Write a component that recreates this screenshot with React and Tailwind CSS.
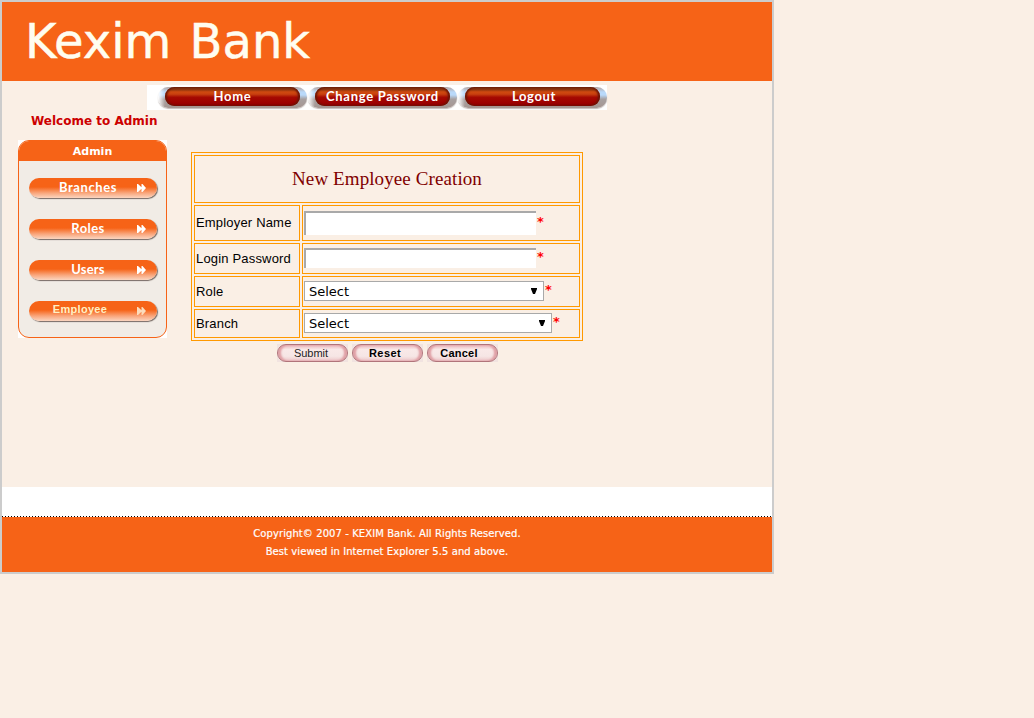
import React from 'react';

function NavButton({ label, text }) {
  return (
    <a className="flex h-[21px] w-[149px] shrink-0 cursor-pointer rounded-[10px] bg-[linear-gradient(90deg,#fff_0px,rgba(255,255,255,0)_7px),linear-gradient(180deg,#b5a5a0_0%,#b9d9fa_24%,#b9d9fa_38%,#a7a0a0_58%,#a59692_100%)] pl-[7px] shadow-[0_1px_1px_#c4bcba]">
      <span className="flex h-[19px] w-[135px] items-center justify-center rounded-[10px] bg-[linear-gradient(180deg,#742c0c_0%,#8e350e_14%,#d04a10_26%,#c8400f_38%,#a50a02_54%,#9c0000_85%,#850000_100%)] shadow-[inset_2px_0_2px_#6b1606,inset_-2px_0_2px_#6b1606]">
        <span className={"whitespace-nowrap font-['Lato',sans-serif] text-[13px] font-bold leading-[19px] text-white " + text}>{label}</span>
      </span>
    </a>
  );
}

function SideButton({ label, last, text }) {
  return (
    <a className="flex h-[20px] w-[128px] shrink-0 cursor-pointer items-center rounded-[10px] bg-[linear-gradient(180deg,#f66317_0%,#f66317_45%,#f9a67c_75%,#fbd5c0_100%)] shadow-[1px_1px_1px_#776a64]">
      <span className={"flex w-[108px] justify-center whitespace-nowrap pb-[2px] leading-[18px] " + (last ? "pb-[4px] pr-[6px] font-['Liberation_Sans',sans-serif] text-[11px] font-bold text-[#fff0c4] " : "pl-[10px] font-['Lato',sans-serif] text-[13px] font-bold text-white ") + text}>{label}</span>
      <svg width="9" height="8" viewBox="0 0 9 8" className={last ? 'text-[#fbdcbc]' : 'mb-px text-white'}>
        <path d="M0 0H1L4.5 3.3V0H5.5L9 4L5.5 8H4.5V4.7L1 8H0Z" fill="currentColor" />
      </svg>
    </a>
  );
}

function Star() {
  return <span className="ml-px font-['DejaVu_Sans',sans-serif] text-[13px] font-bold leading-[13px] text-[#ff0000]">*</span>;
}

function Field({ label, row, children }) {
  return (
    <div className={'flex gap-[2px] ' + row}>
      <div className="flex w-[106px] items-center whitespace-nowrap border border-[#ff9900] pl-px font-['Liberation_Sans',sans-serif] text-[13px] tracking-[0.18px] text-black">{label}</div>
      <div className="flex w-[278px] items-start border border-[#ff9900] pl-px">{children}</div>
    </div>
  );
}

function Select({ width }) {
  return (
    <div className={'flex h-[20px] items-center justify-between border border-[#a9a9a9] bg-white pl-1 pr-[6px] ' + width}>
      <span className="pt-[2px] font-['DejaVu_Sans',sans-serif] text-[13px] leading-[18px] text-black">Select</span>
      <svg width="6" height="6" viewBox="0 0 6 6" className="mb-px"><path d="M0 0H6V1L4 6H2L0 1Z" fill="#000" /></svg>
    </div>
  );
}

function FormButton({ label, text }) {
  return (
    <div className="h-[18px] w-[71px] bg-[#f1e3e0]">
      <button className={"flex h-[18px] w-[71px] items-center justify-center rounded-[9px] border border-[#b0747a] bg-[linear-gradient(180deg,#e9b6b9_0%,#f9e9e8_28%,#f6e6e5_70%,#edc8c9_100%)] font-['Liberation_Sans',sans-serif] text-[11px] leading-[16px] shadow-[inset_3px_0_2px_#e0a0a6,inset_-3px_0_2px_#e0a0a6] " + text}>{label}</button>
    </div>
  );
}

export default function App() {
  return (
    <div className="h-[718px] w-[1034px] overflow-hidden bg-[#faefe5]">
      <div className="flex h-[574px] w-[774px] flex-col border-2 border-[#cccccc]">
        <header className="h-[79px] shrink-0 bg-[#f66317] pl-[23px] pt-[9px]">
          <h1 className="whitespace-nowrap font-['DejaVu_Sans',sans-serif] text-[48px] leading-[60px] text-[#fffdf0] [-webkit-text-stroke:0.5px_#fffdf0] [word-spacing:3px]">Kexim Bank</h1>
        </header>
        <nav className="ml-[145px] mt-1 flex h-[25px] w-[460px] shrink-0 gap-px bg-white pl-[11px] pt-[2px]">
          <NavButton label="Home" text="tracking-[0.7px]" />
          <NavButton label="Change Password" text="tracking-[0.7px]" />
          <NavButton label="Logout" text="tracking-[0.6px] pl-[3px]" />
        </nav>
        <div className="flex h-[377px] shrink-0">
          <aside className="w-[189px] shrink-0 pl-4">
            <p className="ml-[13px] mt-[3px] h-[16px] whitespace-nowrap font-['DejaVu_Sans',sans-serif] text-[12px] font-bold leading-[16px] text-[#cc0000]">Welcome to Admin</p>
            <div className="mt-[11px] h-[198px] w-[149px] bg-white">
              <div className="flex h-[198px] flex-col overflow-hidden rounded-[11px] border border-[#f66317] bg-[#f1ece6]">
                <div className="h-[20px] shrink-0 bg-[#f66317] text-center font-['DejaVu_Sans',sans-serif] text-[11px] font-bold leading-[21px] text-white">Admin</div>
                <div className="flex flex-col gap-[21px] pl-[10px] pt-[17px]">
                  <SideButton label="Branches" text="tracking-[0.6px]" />
                  <SideButton label="Roles" text="tracking-[0.4px]" />
                  <SideButton label="Users" text="tracking-[0.2px]" />
                  <SideButton label="Employee" last text="tracking-[0.3px]" />
                </div>
              </div>
            </div>
          </aside>
          <main className="w-[392px] shrink-0 pt-[42px]">
            <div className="flex h-[189px] w-[392px] flex-col gap-[2px] border border-[#ff9900] p-[2px]">
              <div className="flex h-[48px] w-[386px] shrink-0 items-center justify-center border border-[#ff9900] font-['Liberation_Serif',serif] text-[19px] tracking-[0.1px] text-[#800000]">New Employee Creation</div>
              <Field label="Employer Name" row="h-[36px]">
                <input className="mt-[5px] h-[24px] w-[232px] border-l-2 border-t-2 border-[#a9a9a9] bg-white outline-none" />
                <span className="mt-[9px] flex"><Star /></span>
              </Field>
              <Field label="Login Password" row="h-[31px]">
                <input type="password" className="mt-[4px] h-[20px] w-[232px] border-l-2 border-t-2 border-[#a9a9a9] bg-white outline-none" />
                <span className="mt-[6px] flex"><Star /></span>
              </Field>
              <Field label="Role" row="h-[31px]">
                <div className="mt-[4px]"><Select width="w-[240px]" /></div>
                <span className="mt-[6px] flex"><Star /></span>
              </Field>
              <Field label="Branch" row="h-[29px]">
                <div className="mt-[3px]"><Select width="w-[248px]" /></div>
                <span className="mt-[5px] flex"><Star /></span>
              </Field>
            </div>
            <div className="mt-[3px] flex gap-1 pl-[86px]">
              <FormButton label="Submit" text="pr-[3px] text-[#222222]" />
              <FormButton label="Reset" text="pr-[5px] font-bold text-black tracking-[0.4px]" />
              <FormButton label="Cancel" text="pr-[7px] font-bold text-black tracking-[0.2px]" />
            </div>
          </main>
        </div>
        <div className="h-[29px] shrink-0 bg-white" />
        <div className="h-px shrink-0 bg-[repeating-linear-gradient(90deg,#000_0px,#000_1px,#fff_1px,#fff_3px)]" />
        <footer className="h-[55px] shrink-0 bg-[#f66317] pt-[8px] text-center font-['DejaVu_Sans',sans-serif] text-[10px] leading-[18px] tracking-[0.08px] text-white [-webkit-text-stroke:0.2px_#fff]">
          <p className="whitespace-nowrap">Copyright© 2007 - KEXIM Bank. All Rights Reserved.</p>
          <p className="whitespace-nowrap">Best viewed in Internet Explorer 5.5 and above.</p>
        </footer>
      </div>
    </div>
  );
}
